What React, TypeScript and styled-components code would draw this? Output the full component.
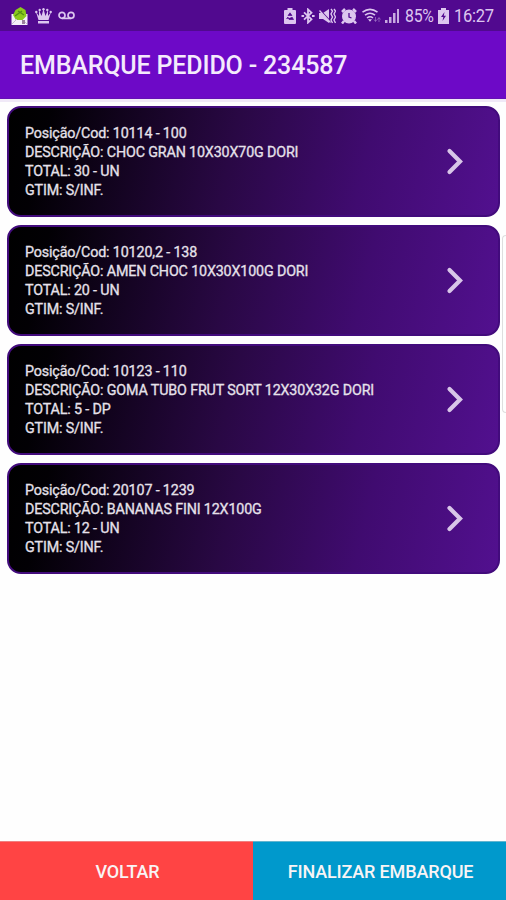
import React from "react";
import styled, { createGlobalStyle } from "styled-components";

const GlobalStyle = createGlobalStyle`
  * { box-sizing: border-box; }
  body { margin: 0; background: #fff; font-family: Roboto, "Liberation Sans", sans-serif; }
`;

const Screen = styled.div`
  display: flex;
  flex-direction: column;
  width: 506px;
  height: 900px;
  overflow: hidden;
  background: #fefefe;
`;

const StatusBar = styled.header`
  display: flex;
  justify-content: space-between;
  height: 31px;
  flex: none;
  padding: 0 12px 0 10px;
  background: #51098f;
  color: #dcc6ef;
`;

const StatusGroup = styled.div<{ $gap: number }>`
  display: flex;
  align-items: center;
  gap: ${(p) => p.$gap}px;
  height: 31px;

  svg { display: block; flex: none; }
`;

const StatusText = styled.span<{ $width: number; $scale: number }>`
  width: ${(p) => p.$width}px;
  font-size: 18px;
  line-height: 32px;
  padding-top: 1px;
  letter-spacing: -0.3px;
  white-space: nowrap;
  transform: scaleX(${(p) => p.$scale});
  transform-origin: left center;
`;

const TitleBar = styled.div`
  display: flex;
  align-items: center;
  flex: none;
  height: 68px;
  padding: 3px 20px 0;
  background: #6d09c7;
  border-bottom: 1px solid #6410b4;
`;

const Title = styled.h1`
  margin: 0;
  font-size: 25px;
  font-weight: 500;
  line-height: 30px;
  letter-spacing: -0.16px;
  color: #f4eafc;
  white-space: nowrap;
`;

const Content = styled.main`
  display: flex;
  flex: 1;
  min-height: 0;
  border-top: 3px solid #f0e9f7;
`;

const List = styled.ul`
  display: flex;
  flex-direction: column;
  gap: 8px;
  width: 500px;
  margin: 0;
  padding: 4px 0 0 7px;
  list-style: none;
`;

const Card = styled.li`
  display: flex;
  align-items: center;
  justify-content: space-between;
  flex: none;
  height: 111px;
  padding: 0 33px 0 16px;
  border: 2px solid #420b7c;
  border-radius: 14px;
  background: linear-gradient(102.7deg, #000 0%, #020004 8%, #290844 45%, #400b70 72%, #52108f 100%);
`;

const Details = styled.div`
  display: flex;
  flex-direction: column;
  padding-top: 1px;
  color: #e6e1ea;
`;

const Line = styled.span`
  font-size: 14.3px;
  line-height: 19px;
  letter-spacing: -0.15px;
  -webkit-text-stroke: 0.3px #e6e1ea;
  white-space: nowrap;
`;

const ScrollThumb = styled.div`
  width: 4px;
  height: 178px;
  margin: 133px 0 0 auto;
  border: 1px solid #dedede;
  border-right: 0;
  border-radius: 4px 0 0 4px;
`;

const Actions = styled.footer`
  display: flex;
  flex: none;
  height: 59px;
`;

const ActionButton = styled.button<{ $color: string; $edge: string }>`
  flex: 1 1 0;
  padding: 1px 0 0 2px;
  border: 0;
  border-top: 1px solid ${(p) => p.$edge};
  background: ${(p) => p.$color};
  color: #f8f4f5;
  font-family: inherit;
  font-size: 18px;
  font-weight: 500;
  letter-spacing: -0.15px;
  white-space: nowrap;
`;

const HomeIcon = () => (
  <svg width="19" height="20" viewBox="0 0 19 20">
    <path d="M1.5 8h16v11h-16z" fill="#f4effa" />
    <path d="M3 9l2.5-5 5-3 5 3 1 6-4 4H6z" fill="#8bc91e" />
    <path d="M5 10l7-5M8 5l6 4" stroke="#548e16" strokeWidth="1.5" />
    <path d="M2 18l5-5M17 18l-4-4" stroke="#c7bdd0" />
    <rect x="12" y="14" width="3" height="4" fill="#9b809c" />
  </svg>
);

const CrownIcon = () => (
  <svg width="17" height="16" viewBox="0 0 17 16" fill="currentColor">
    <path d="M1 4l3 4V2l2.5 6L8.5 1l2 7L13 2v6l3-4-2.5 8h-10z" />
    <circle cx="1.3" cy="4" r="1.2" /><circle cx="4.7" cy="2" r="1.2" />
    <circle cx="8.5" cy="1.3" r="1.2" /><circle cx="12.3" cy="2" r="1.2" />
    <circle cx="15.7" cy="4" r="1.2" /><path d="M3 13h11v2.5H3z" />
  </svg>
);

const VoicemailIcon = () => (
  <svg width="17" height="9" viewBox="0 0 17 9" fill="none" stroke="currentColor" strokeWidth="1.7">
    <circle cx="4" cy="4.3" r="3" /><circle cx="13" cy="4.3" r="3" /><path d="M4 7.4h9" />
  </svg>
);

const RecycleBatteryIcon = () => (
  <svg width="12" height="16" viewBox="0 0 12 16">
    <path d="M3.5 0h5v2H11q1 0 1 1v12q0 1-1 1H1q-1 0-1-1V3q0-1 1-1h2.5z" fill="currentColor" />
    <path d="M4 7.5L6 4.8l2 2.7zM2.5 11l1.4-2 1.2 2.5H9.5L8 9" fill="#51098f" stroke="#51098f" strokeWidth=".7" />
  </svg>
);

const BluetoothIcon = () => (
  <svg width="14" height="16" viewBox="0 0 14 16" fill="none" stroke="currentColor" strokeWidth="1.8">
    <path d="M3 4.3l7.5 7L7 14.6V1.4l3.5 3.3L3 11.7" />
    <path d="M.5 8h2.6M11 8h2.6" strokeWidth="2" />
  </svg>
);

const MuteVibrateIcon = () => (
  <svg width="17" height="16" viewBox="0 0 17 16">
    <path d="M0 5h4l6-4v14l-6-4H0z" fill="currentColor" />
    <path d="M1 2l11 12" stroke="#51098f" strokeWidth="1.5" />
    <path d="M.5 2.5l11 12" stroke="currentColor" strokeWidth="1.3" />
    <path d="M12 1l1.5 2L12 6l1.5 3L12 12l1.5 3M15 1l1.5 2L15 6l1.5 3L15 12l1.5 3" fill="none" stroke="currentColor" strokeWidth="1.4" />
  </svg>
);

const AlarmIcon = () => (
  <svg width="16" height="16" viewBox="0 0 16 16">
    <circle cx="8" cy="8.5" r="7" fill="currentColor" />
    <path d="M1 4l3-3M15 4l-3-3M3 13l-2 2.5M13 13l2 2.5" stroke="currentColor" strokeWidth="2.5" />
    <path d="M8 5v4l2.5 1" fill="none" stroke="#51098f" strokeWidth="1.3" />
  </svg>
);

const WifiIcon = () => (
  <svg width="19" height="15" viewBox="0 0 19 15" fill="none" stroke="currentColor" strokeWidth="1.6">
    <path d="M.5 4.2Q8 -1.5 15.5 4.2M3 7.2Q8 3.2 13 7.2M5 10Q8 7.6 11 10" />
    <path d="M6 11.2h4L8 13.7z" fill="currentColor" stroke="none" />
    <path d="M13.5 9v4m-1.5-1.5l1.5 2 1.5-2M17 14v-4m-1.5 1.5l1.5-2 1.5 2" strokeWidth=".8" opacity=".5" />
  </svg>
);

const SignalIcon = () => (
  <svg width="15" height="15" viewBox="0 0 15 15" fill="currentColor">
    <path d="M0 12h2.5v3H0zM4 9h2.5v6H4zM8 5h2.5v10H8zM12 1h2v14h-2z" opacity=".85" />
  </svg>
);

const ChargingIcon = () => (
  <svg width="11" height="16" viewBox="0 0 11 16">
    <path d="M3 0h5v2h3v14H0V2h3z" fill="currentColor" />
    <path d="M6.5 4L3 9h2.3L4.5 13 8 7.8H5.8z" fill="#51098f" />
  </svg>
);

const Chevron = () => (
  <svg width="20" height="30" viewBox="0 0 20 30" fill="none" stroke="#d8c6e8" strokeWidth="4.2" strokeLinecap="round">
    <path d="M4.5 4L15 14.5 4.5 25" />
  </svg>
);

const items = [
  { code: "10114 - 100", description: "CHOC GRAN 10X30X70G DORI", total: "30 - UN" },
  { code: "10120,2 - 138", description: "AMEN CHOC 10X30X100G DORI", total: "20 - UN" },
  { code: "10123 - 110", description: "GOMA TUBO FRUT SORT 12X30X32G DORI", total: "5 - DP" },
  { code: "20107 - 1239", description: "BANANAS FINI 12X100G", total: "12 - UN" },
];

export default function App() {
  return (
    <Screen>
      <GlobalStyle />
      <StatusBar>
        <StatusGroup $gap={6}>
          <HomeIcon />
          <CrownIcon />
          <VoicemailIcon />
        </StatusGroup>
        <StatusGroup $gap={4.6}>
          <RecycleBatteryIcon />
          <BluetoothIcon />
          <MuteVibrateIcon />
          <AlarmIcon />
          <WifiIcon />
          <SignalIcon />
          <StatusText $width={29} $scale={0.88}>85%</StatusText>
          <ChargingIcon />
          <StatusText $width={40} $scale={0.92}>16:27</StatusText>
        </StatusGroup>
      </StatusBar>
      <TitleBar>
        <Title>EMBARQUE PEDIDO - 234587</Title>
      </TitleBar>
      <Content>
        <List>
          {items.map((item) => (
            <Card key={item.code}>
              <Details>
                <Line>Posição/Cod: {item.code}</Line>
                <Line>DESCRIÇÃO: {item.description}</Line>
                <Line>TOTAL: {item.total}</Line>
                <Line>GTIM: S/INF.</Line>
              </Details>
              <Chevron />
            </Card>
          ))}
        </List>
        <ScrollThumb />
      </Content>
      <Actions>
        <ActionButton $color="#ff4444" $edge="#f08080">VOLTAR</ActionButton>
        <ActionButton $color="#0099cc" $edge="#62b5cf">FINALIZAR EMBARQUE</ActionButton>
      </Actions>
    </Screen>
  );
}
